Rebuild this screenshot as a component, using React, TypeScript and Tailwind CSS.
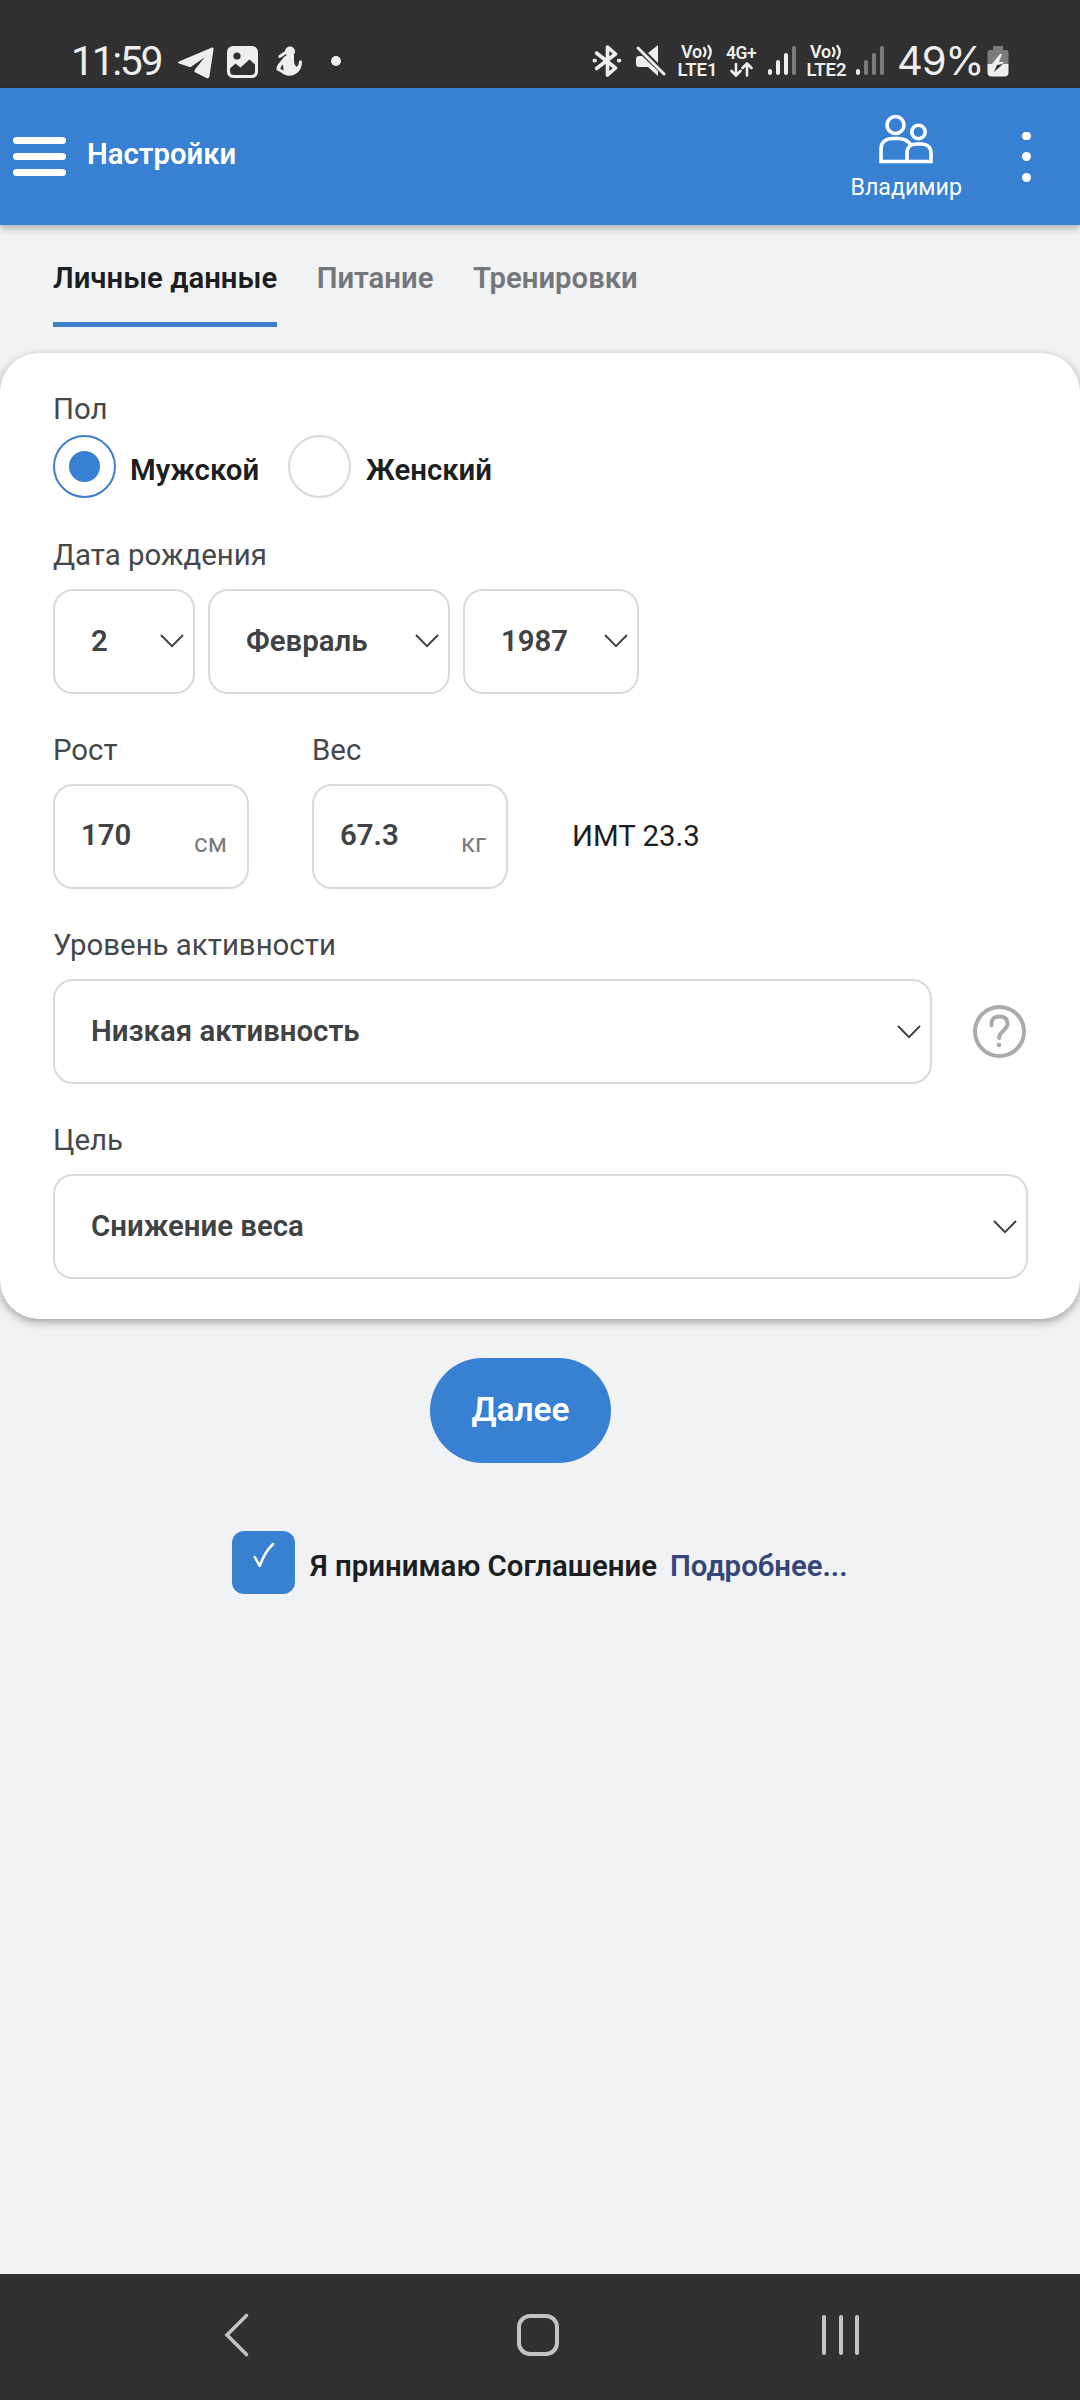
import type { ReactNode } from 'react'

function StatusBar() {
    return <div className="flex h-[88px] shrink-0 items-start bg-[#303030] pl-[71px] pt-[40px] text-[#eeeeee]">
        <div className="h-[42px] w-[91px] whitespace-nowrap text-[41px] leading-[42px] tracking-[-2.4px]">11:59</div>
        <svg className="ml-[15px] mt-[6px] shrink-0" width="38" height="34" viewBox="0 0 38 34" fill="currentColor">
            <path d="M2 15.5 35 1.500Q37 1 36.500 3.500L32.500 30Q32 33 29.500 32L18.500 26.500Q16.500 25.500 18 23.500L27.500 11.500 14.500 20.500Q13 21.500 11 20.500L2 17.500Q0 16.500 2 15.500Z" />
        </svg>
        <svg className="ml-[12px] mt-[5.500px] shrink-0" width="31" height="32" viewBox="0 0 31 32">
            <rect width="31" height="32" rx="6" fill="currentColor" />
            <circle cx="10" cy="10" r="3.600" fill="#303030" />
            <path d="M3 22.500 8.500 17.500 13.500 21.500 22.500 13.500 28 18.500V25Q28 29 24 29H7Q3 29 3 25Z" fill="#303030" />
        </svg>
        <svg className="ml-[17px] mt-[6px] shrink-0" width="28" height="31" viewBox="0 0 28 31" fill="currentColor">
            <circle cx="15" cy="5.500" r="5" />
            <path d="M11 4.500 3.500 9.500V12L6 11.500 11 8Z" />
            <path d="M9 11 12 9H19V15Q18.500 18 21.500 21 24 19 24 15.500 25.500 13 27 15.500 27 23 22 27 18 30.500 12 29.500 8.500 28.500 7 27L1.500 24Q1 20 5 16Z" />
            <path d="M8 18.500Q5 21 5.500 23L8.500 24.500Z" fill="#303030" />
        </svg>
        <div className="ml-[28px] mt-[16px] size-[10px] rounded-full bg-[#eeeeee]" />
        <div className="flex-1" />
        <svg className="mt-[4px] shrink-0" width="30" height="34" viewBox="0 0 30 34" fill="none" stroke="currentColor" strokeWidth="3.600" strokeLinejoin="round" strokeLinecap="round">
            <path d="M4.500 9 23.500 24 15.500 31V3L23.500 10 4.500 24.500" />
            <path d="M2.200 16.600h1M26.600 16.600h1" />
        </svg>
        <svg className="ml-[13px] mt-[5px] shrink-0" width="32" height="32" viewBox="0 0 32 32" fill="currentColor">
            <path d="M23 0V18L13 8Z" />
            <path d="M4 11H7L23 26V31L13 22H4Q1 22 1 19V14Q1 11 4 11Z" />
            <path d="M3 3 29 29" stroke="currentColor" strokeWidth="3" strokeLinecap="round" />
        </svg>
        <Volte name="LTE1" />
        <div className="ml-[8px] mt-[4px] w-[32px]">
            <div className="h-[17px] text-[17.500px] font-semibold leading-[18px] tracking-[-0.500px]">4G+</div>
            <svg width="30" height="16" viewBox="0 0 30 16" fill="none" stroke="currentColor" strokeWidth="2.600" strokeLinecap="round" strokeLinejoin="round">
                <path d="M10 3V14M5.500 10 10 14.500 14.500 10M21 14.500V3M16.500 7 21 2.500 25.500 7" />
            </svg>
        </div>
        <Signal bars={3} className="ml-[10px]" />
        <Volte name="LTE2" />
        <Signal bars={1} className="ml-[9px]" />
        <div className="ml-[13px] h-[42px] w-[84px] whitespace-nowrap font-[Inter,sans-serif] text-[40px] leading-[42px] tracking-[-1.200px]">49%</div>
        <svg className="ml-[6px] mr-[71px] mt-[6px] shrink-0" width="22" height="31" viewBox="0 0 22 31">
            <path d="M6 0h10v4h3q2.500 0 2.500 2.500V18H.500V6.500Q.500 4 3 4h3Z" fill="#7c7c7c" />
            <path d="M.500 18h21v8.500q0 4-4 4h-13q-4 0-4-4Z" fill="currentColor" />
            <path d="M13 8 5 18h5L7 26l10-10h-5l3-8Z" fill="currentColor" />
            <path d="M10 19 7 26 16 18Z" fill="#303030" />
        </svg>
    </div>
}

function Volte({ name }: { name: string }) {
    return <div className="ml-[10px] mt-[3px] flex w-[41px] shrink-0 flex-col items-center font-semibold">
        <div className="flex h-[18px] items-center">
            <div className="text-[18px] leading-[18px] tracking-[-0.300px]">Vo</div>
            <svg width="12" height="18" viewBox="0 0 12 18" fill="none" stroke="currentColor" strokeWidth="2.300" strokeLinecap="round">
                <path d="M2 5Q5 9 2 13M6.500 3Q11 9 6.500 15.500" />
            </svg>
        </div>
        <div className="h-[16px] text-[18.500px] leading-[18px]">{name}</div>
    </div>
}

function Signal({ bars, className }: { bars: number, className: string }) {
    return <div className={'mt-[6px] flex h-[29px] shrink-0 items-end gap-1 ' + className}>
        {['h-[6px]', 'h-[15px]', 'h-[22px]', 'h-[29px]'].map((h, i) =>
            <div key={h} className={'w-1 rounded-full ' + h + (i < bars ? ' bg-[#eeeeee]' : ' bg-[#7c7c7c]')} />
        )}
    </div>
}

function Header() {
    return <header className="z-10 flex h-[137px] shrink-0 items-start bg-[#3780d2] pl-[13px] text-white shadow-[0_3px_8px_rgba(0,0,0,0.3)]">
        <div className="mt-[49px] flex w-[53px] flex-col gap-[9px]">
            <div className="h-[7px] rounded-full bg-white" />
            <div className="h-[7px] rounded-full bg-white" />
            <div className="h-[7px] rounded-full bg-white" />
        </div>
        <h1 className="ml-[21px] mt-[46px] text-[29.3px] font-semibold leading-[40px]">Настройки</h1>
        <div className="flex-1" />
        <div className="mt-[26px] flex w-[120px] flex-col items-center">
            <svg width="56" height="50" viewBox="0 0 56 50" fill="none" stroke="currentColor" strokeWidth="3.600">
                <circle cx="17.500" cy="11" r="8.500" />
                <circle cx="40.500" cy="18" r="6.700" />
                <path d="M28 47.500H3V35C3 28 8 24.500 15 24.500H20C26 24.500 30 26.500 33 31" />
                <path d="M29 47.500V39C29 33 33 30 38 30H43C49 30 53 33 53 39V47.500Z" />
            </svg>
            <div className="mt-[8px] text-[23.200px] leading-[30px]">Владимир</div>
        </div>
        <div className="ml-[56px] mr-[49px] mt-[43.500px] flex flex-col gap-[12px]">
            <div className="size-[8.800px] rounded-full bg-white" />
            <div className="size-[8.800px] rounded-full bg-white" />
            <div className="size-[8.800px] rounded-full bg-white" />
        </div>
    </header>
}

function Tabs() {
    return <nav className="flex h-[128px] shrink-0 items-start gap-[39.500px] pl-[53px] pt-[33px] text-[29.3px] font-semibold leading-[40px] text-[#73777a]">
        <div className="h-[69px] border-b-[5px] border-[#3d7fc9] text-[#1d1e1f]">Личные данные</div>
        <div>Питание</div>
        <div>Тренировки</div>
    </nav>
}

function Label({ children }: { children: ReactNode }) {
    return <div className="flex h-[68px] items-center pt-px text-[29.4px] text-[#45484b]">{children}</div>
}

function Chevron() {
    return <svg className="mr-[9px] shrink-0" width="24" height="14" viewBox="0 0 24 14" fill="none" stroke="#3c3e40" strokeWidth="1.900" strokeLinecap="round">
        <path d="M1.500 1.500 12 12.200 22.500 1.500" />
    </svg>
}

function Select({ value, className }: { value: string, className: string }) {
    return <div className={'flex h-[105px] items-center justify-between rounded-[20px] border-2 border-[#d9dadb] pl-[36px] text-[29.4px] font-semibold text-[#404244] ' + className}>
        <div>{value}</div>
        <Chevron />
    </div>
}

function NumberField({ label, value, unit }: { label: string, value: string, unit: string }) {
    return <div className="w-[196px]">
        <Label>{label}</Label>
        <div className="flex h-[105px] items-center justify-between rounded-[20px] border-2 border-[#d9dadb] pl-[26px] pr-[20px]">
            <div className="pb-[2px] text-[29.4px] font-semibold text-[#404244]">{value}</div>
            <div className="pt-[13px] text-[26px] text-[#797c7f]">{unit}</div>
        </div>
    </div>
}

function PersonalCard() {
    return <section className="flex h-[966px] shrink-0 flex-col rounded-[39px] bg-white px-[53px] pt-[30px] shadow-[0_3px_10px_rgba(0,0,0,0.35)]">
        <div className="flex h-[52px] items-center pt-px text-[29.4px] text-[#45484b]">Пол</div>
        <div className="flex h-[63px] items-center text-[29.4px] font-semibold text-[#1d1e1f]">
            <div className="flex size-[63px] items-center justify-center rounded-full border-2 border-[#3d7fc9]">
                <div className="mb-px mr-px size-[31px] rounded-full bg-[#3780d2]" />
            </div>
            <div className="ml-[14px] w-[158px] pt-[8px]">Мужской</div>
            <div className="size-[63px] rounded-full border-2 border-[#d9dadb]" />
            <div className="ml-[15px] pt-[8px]">Женский</div>
        </div>
        <div className="mt-[23px]">
            <Label>Дата рождения</Label>
            <div className="flex gap-[13px]">
                <Select value="2" className="w-[142px] pb-px" />
                <Select value="Февраль" className="w-[242px] pb-px" />
                <Select value="1987" className="w-[176px] pb-px" />
            </div>
        </div>
        <div className="mt-[22px] flex items-end">
            <NumberField label="Рост" value="170" unit="см" />
            <div className="w-[63px]" />
            <NumberField label="Вес" value="67.3" unit="кг" />
            <div className="ml-[64px] flex h-[105px] items-center text-[29.4px] text-[#1d1e1f]">ИМТ 23.3</div>
        </div>
        <div className="mt-[22px]">
            <Label>Уровень активности</Label>
            <div className="flex items-center">
                <Select value="Низкая активность" className="w-[879px]" />
                <svg className="ml-[40px]" width="55" height="55" viewBox="0 0 55 55" fill="none" stroke="#a9abad" strokeWidth="4">
                    <circle cx="27.500" cy="27.500" r="24.500" />
                    <path d="M19.500 21.500C19 14 23 12.500 27.500 12.500 33 12.500 35.500 15.500 35.500 20 35.500 26 27.500 27 27 34" strokeLinecap="round" />
                    <circle cx="27" cy="41" r="2.300" fill="#a9abad" stroke="none" />
                </svg>
            </div>
        </div>
        <div className="mt-[22px]">
            <Label>Цель</Label>
            <Select value="Снижение веса" className="w-[975px]" />
        </div>
    </section>
}

function Agreement() {
    return <div className="mt-[68px] flex h-[63px] items-center pl-[232px] text-[29.4px] font-semibold">
        <div className="flex size-[63px] justify-center rounded-[12px] bg-[#3780d2] pt-[11px]">
            <svg width="22" height="26" viewBox="0 0 22 26" fill="none" stroke="#fff" strokeWidth="2.500" strokeLinecap="round" strokeLinejoin="round">
                <path d="M1.800 15 6.800 24Q11 11 20 2" />
            </svg>
        </div>
        <div className="ml-[15px] pt-[8px] text-[#1d1e1f]">Я принимаю Соглашение</div>
        <div className="ml-[13px] pt-[8px] text-[#364579]">Подробнее...</div>
    </div>
}

function NavigationBar() {
    return <div className="flex h-[126px] shrink-0 items-start bg-[#303030] pl-[223px] pt-[38px] text-[#c3c3c3]">
        <svg width="28" height="46" viewBox="0 0 28 46" fill="none" stroke="currentColor" strokeWidth="3.600" strokeLinecap="round">
            <path d="M23.500 3.500 4 23 23.500 42.500" />
        </svg>
        <div className="ml-[266px] mt-[2px] size-[42px] rounded-[13px] border-4 border-[#c3c3c3]" />
        <div className="ml-[263px] mt-[3px] flex gap-[12.500px]">
            <div className="h-[40px] w-[4px] rounded-full bg-[#c3c3c3]" />
            <div className="h-[40px] w-[4px] rounded-full bg-[#c3c3c3]" />
            <div className="h-[40px] w-[4px] rounded-full bg-[#c3c3c3]" />
        </div>
    </div>
}

export default function App() {
    return <div className="flex h-[2400px] w-[1080px] flex-col overflow-hidden bg-[#f0f2f4] font-[Roboto,sans-serif]">
        <StatusBar />
        <Header />
        <Tabs />
        <PersonalCard />
        <div className="flex-1">
            <button className="ml-[430px] mt-[39px] block h-[105px] w-[181px] rounded-full bg-[#3780d2] pb-[2px] text-[33.500px] font-semibold leading-[100px] text-white">Далее</button>
            <Agreement />
        </div>
        <NavigationBar />
    </div>
}
